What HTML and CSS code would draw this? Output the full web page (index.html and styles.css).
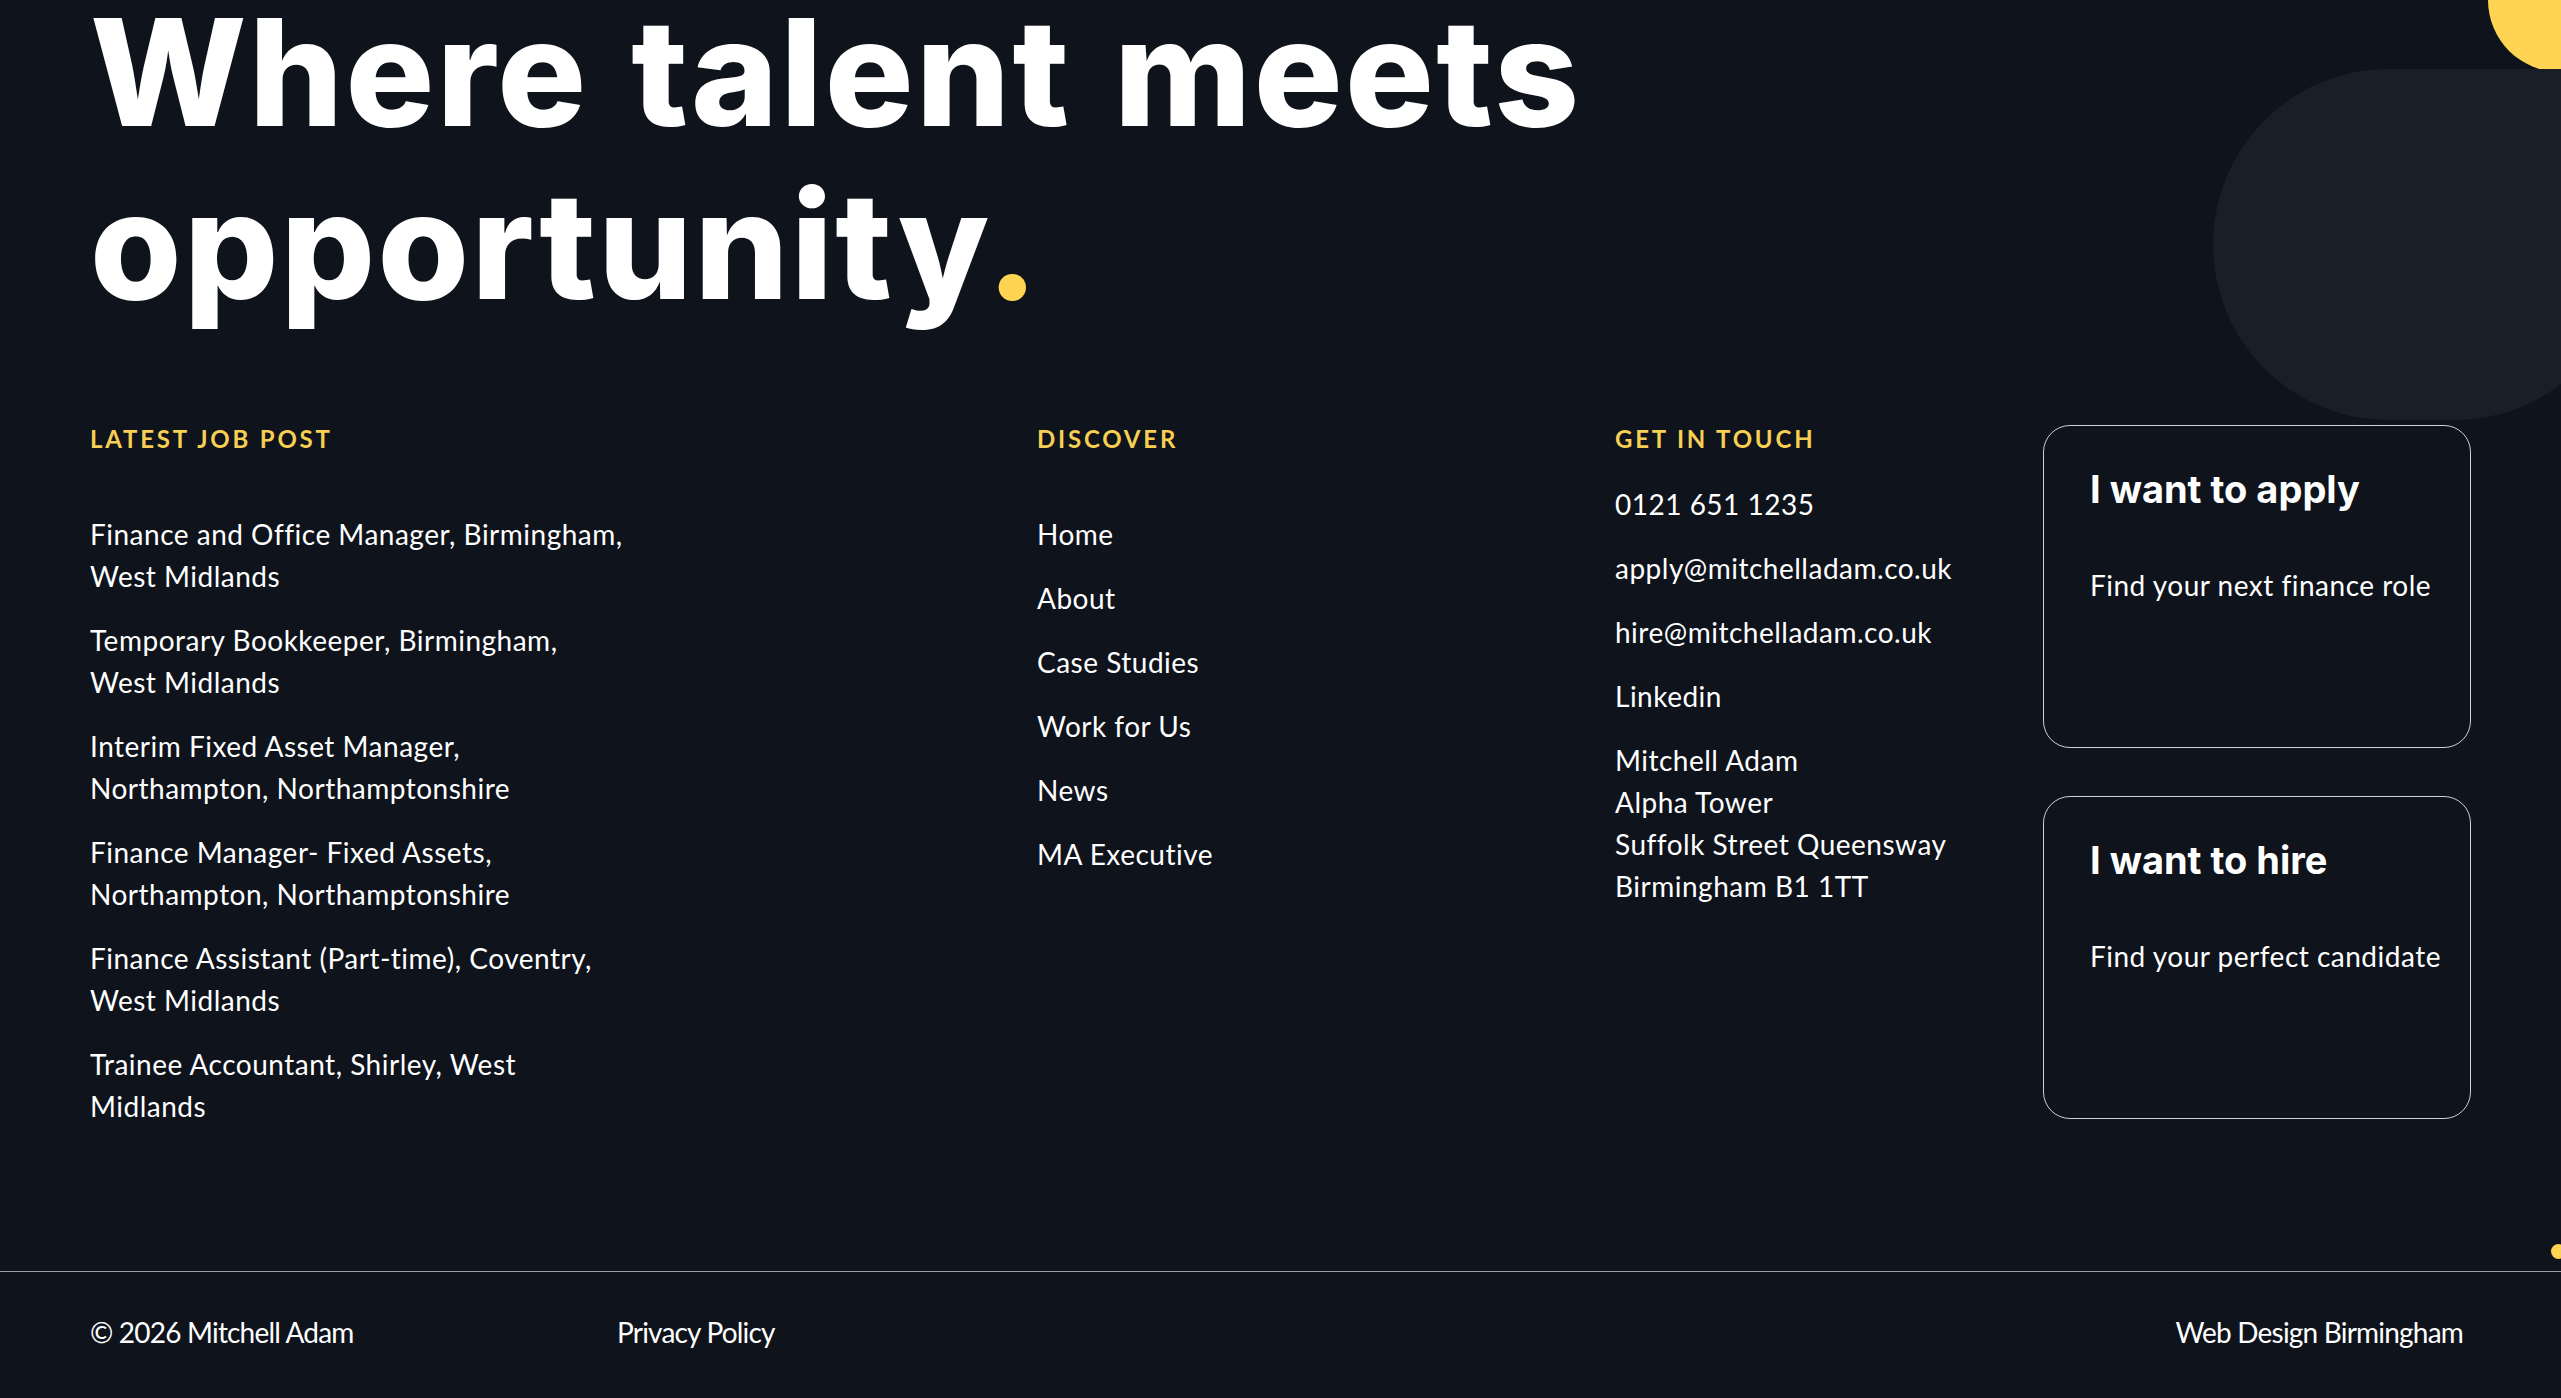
FILE: index.html
```html
<!DOCTYPE html>
<html lang="en">
<head>
<meta charset="utf-8">
<title>Mitchell Adam – Footer</title>
<link rel="stylesheet" href="styles.css">
</head>
<body>
<footer class="site-footer">
  <div class="deco deco-sun"></div>
  <div class="deco deco-blob"></div>
  <div class="deco deco-dot"></div>

  <div class="container">
    <h2 class="headline">Where talent meets<br>opportunity<span class="accent">.</span></h2>

    <div class="footer-grid">
      <div class="col col-jobs">
        <h3 class="col-title">Latest Job Post</h3>
        <ul class="link-list jobs-list">
          <li><a href="#">Finance and Office Manager, Birmingham,<br>West Midlands</a></li>
          <li><a href="#">Temporary Bookkeeper, Birmingham,<br>West Midlands</a></li>
          <li><a href="#">Interim Fixed Asset Manager,<br>Northampton, Northamptonshire</a></li>
          <li><a href="#">Finance Manager- Fixed Assets,<br>Northampton, Northamptonshire</a></li>
          <li><a href="#">Finance Assistant (Part-time), Coventry,<br>West Midlands</a></li>
          <li><a href="#">Trainee Accountant, Shirley, West<br>Midlands</a></li>
        </ul>
      </div>

      <div class="col col-discover">
        <h3 class="col-title">Discover</h3>
        <ul class="link-list">
          <li><a href="#">Home</a></li>
          <li><a href="#">About</a></li>
          <li><a href="#">Case Studies</a></li>
          <li><a href="#">Work for Us</a></li>
          <li><a href="#">News</a></li>
          <li><a href="#">MA Executive</a></li>
        </ul>
      </div>

      <div class="col col-contact">
        <h3 class="col-title">Get in Touch</h3>
        <ul class="link-list contact-list">
          <li><a href="#">0121 651 1235</a></li>
          <li><a href="#">apply@mitchelladam.co.uk</a></li>
          <li><a href="#">hire@mitchelladam.co.uk</a></li>
          <li><a href="#">Linkedin</a></li>
          <li class="address">Mitchell Adam<br>Alpha Tower<br>Suffolk Street Queensway<br>Birmingham B1 1TT</li>
        </ul>
      </div>

      <div class="col col-cards">
        <a class="cta-card" href="#">
          <span class="cta-title">I want to apply</span>
          <span class="cta-text">Find your next finance role</span>
        </a>
        <a class="cta-card" href="#">
          <span class="cta-title">I want to hire</span>
          <span class="cta-text">Find your perfect candidate</span>
        </a>
      </div>
    </div>
  </div>

  <div class="footer-bottom">
    <div class="container bottom-row">
      <span class="copyright">© 2026 Mitchell Adam</span>
      <a class="bottom-link" href="#">Privacy Policy</a>
      <a class="bottom-link credit" href="#">Web Design Birmingham</a>
    </div>
  </div>
</footer>
</body>
</html>
```

FILE: styles.css
```css
* { box-sizing: border-box; }

html, body {
  margin: 0;
  padding: 0;
  background: #0e131c;
}

body {
  font-family: "Lato", "Noto Sans", sans-serif;
  color: #ffffff;
  overflow: hidden;
}

a { color: inherit; text-decoration: none; }

.site-footer {
  position: relative;
  height: 1398px;
  overflow: hidden;
  background: #0e131c;
}

.deco { position: absolute; }

.deco-sun {
  left: 2488px;
  top: -72px;
  width: 144px;
  height: 144px;
  border-radius: 50%;
  background: #ffd452;
}

.deco-blob {
  left: 2213px;
  top: 69px;
  width: 417px;
  height: 351px;
  border-radius: 176px 0 176px 176px;
  background: #1a1e27;
}

.deco-dot {
  left: 2551px;
  top: 1244px;
  width: 15px;
  height: 15px;
  border-radius: 50%;
  background: #ffd452;
}

.container {
  position: relative;
  padding: 0 90px;
}

.headline {
  margin: -14px 0 90px;
  font-family: "Inter", "Liberation Sans", sans-serif;
  font-weight: 800;
  font-size: 148px;
  line-height: 173px;
  letter-spacing: 2.4px;
  word-spacing: 8px;
  color: #ffffff;
}

.accent { color: #ffd452; }

.footer-grid {
  display: grid;
  grid-template-columns: 947px 578px 1fr 428px;
  align-items: start;
}

.col-title {
  margin: 0;
  font-size: 24px;
  line-height: 34px;
  font-weight: 700;
  letter-spacing: 2.8px;
  text-transform: uppercase;
  color: #f7cf52;
}

.link-list {
  list-style: none;
  margin: 57px 0 0;
  padding: 0;
  display: flex;
  flex-direction: column;
  gap: 22px;
  font-size: 28px;
  line-height: 42px;
  letter-spacing: 0.5px;
}

.contact-list { margin-top: 27px; }

.address { font-style: normal; }

.col-cards {
  display: flex;
  flex-direction: column;
  gap: 48px;
  margin-top: 3px;
}

.cta-card {
  display: flex;
  flex-direction: column;
  height: 323px;
  padding: 41px 12px 0 46px;
  border: 1px solid #cdd1d8;
  border-radius: 27px;
}

.cta-title {
  font-family: "Inter", "Liberation Sans", sans-serif;
  font-weight: 700;
  font-size: 38px;
  line-height: 44px;
}

.cta-text {
  margin-top: 53px;
  font-size: 28px;
  line-height: 42px;
  letter-spacing: 0.5px;
  white-space: nowrap;
}

.footer-bottom {
  position: absolute;
  left: 0;
  right: 0;
  top: 1271px;
  border-top: 1px solid #9aa0a8;
}

.bottom-row {
  display: grid;
  grid-template-columns: 527px 1fr auto;
  padding-top: 39px;
  padding-right: 98px;
  font-size: 28px;
  line-height: 42px;
  letter-spacing: -0.8px;
}
```
